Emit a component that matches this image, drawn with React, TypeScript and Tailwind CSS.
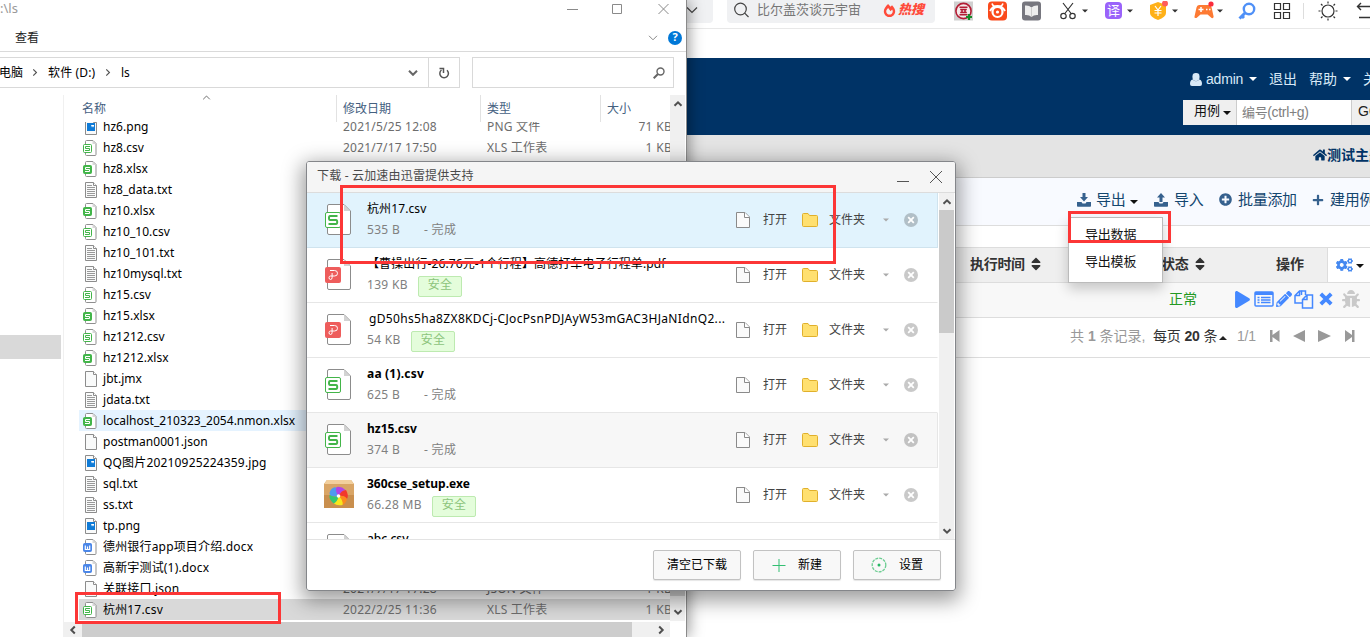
import {
  FaBug,
  FaCogs,
  FaFireAlt,
  FaHome,
  FaPencilAlt,
  FaPlay,
  FaPlus,
  FaPlusCircle,
  FaSort,
} from "react-icons/fa";

type FileKind = "img" | "csv" | "xlsx" | "txt" | "blank" | "docx";

interface FileItem {
  name: string;
  kind: FileKind;
  date?: string;
  type?: string;
  size?: string;
}

interface DownloadItem {
  name: string;
  icon: "sheet" | "pdf" | "box";
  size: string;
  sizeWidth: string;
  safe?: boolean;
  weight?: string;
  bg?: string;
}

const files: FileItem[] = [
  { name: "hz6.png", kind: "img", date: "2021/5/25 12:08", type: "PNG 文件", size: "71 KB" },
  { name: "hz8.csv", kind: "csv", date: "2021/7/17 17:50", type: "XLS 工作表", size: "1 KB" },
  { name: "hz8.xlsx", kind: "xlsx" },
  { name: "hz8_data.txt", kind: "txt" },
  { name: "hz10.xlsx", kind: "xlsx" },
  { name: "hz10_10.csv", kind: "csv" },
  { name: "hz10_101.txt", kind: "txt" },
  { name: "hz10mysql.txt", kind: "txt" },
  { name: "hz15.csv", kind: "csv" },
  { name: "hz15.xlsx", kind: "xlsx" },
  { name: "hz1212.csv", kind: "csv" },
  { name: "hz1212.xlsx", kind: "xlsx" },
  { name: "jbt.jmx", kind: "blank" },
  { name: "jdata.txt", kind: "txt" },
  { name: "localhost_210323_2054.nmon.xlsx", kind: "xlsx" },
  { name: "postman0001.json", kind: "blank" },
  { name: "QQ图片20210925224359.jpg", kind: "img" },
  { name: "sql.txt", kind: "txt" },
  { name: "ss.txt", kind: "txt" },
  { name: "tp.png", kind: "img" },
  { name: "德州银行app项目介绍.docx", kind: "docx" },
  { name: "高新宇测试(1).docx", kind: "docx" },
  { name: "关联接口.json", kind: "blank", date: "2021/7/17 17:28", type: "JSON 文件", size: "1 KB" },
  { name: "杭州17.csv", kind: "csv", date: "2022/2/25 11:36", type: "XLS 工作表", size: "1 KB" },
];

const downloads: DownloadItem[] = [
  { name: "杭州17.csv", icon: "sheet", size: "535 B", sizeWidth: "w-[57px]", bg: "bg-[#e1f3fd] border-[#cfe3ee]" },
  { name: "【曹操出行-26.76元-1个行程】高德打车电子行程单.pdf", icon: "pdf", size: "139 KB", sizeWidth: "w-[51px]", safe: true, weight: "tracking-[0.1px]" },
  { name: "gD50hs5ha8ZX8KDCj-CJocPsnPDJAyW53mGAC3HJaNIdnQ2...", icon: "pdf", size: "54 KB", sizeWidth: "w-[44px]", safe: true, weight: "pl-0.5 tracking-[0.34px]" },
  { name: "aa (1).csv", icon: "sheet", size: "625 B", sizeWidth: "w-[57px]", weight: "font-bold tracking-[0.2px]" },
  { name: "hz15.csv", icon: "sheet", size: "374 B", sizeWidth: "w-[57px]", weight: "font-bold" },
  { name: "360cse_setup.exe", icon: "box", size: "66.28 MB", sizeWidth: "w-[65px]", safe: true, weight: "font-bold" },
  { name: "abc.csv", icon: "sheet", size: "512 B", sizeWidth: "w-[57px]", weight: "font-medium" },
];
downloads[4].bg = "bg-[#f7f7f7] border-[#e6e6e6]";

const Caret = ({ className = "w-2", up = false }: { className?: string; up?: boolean }) => (
  <svg viewBox="0 0 8 4" className={`h-1 shrink-0 ${className}`} fill="currentColor">
    <path d={up ? "M0 4h8L4 0z" : "M0 0h8L4 4z"} />
  </svg>
);

const Chevron = ({ className = "" }: { className?: string }) => (
  <svg viewBox="0 0 10 6" className={`shrink-0 ${className}`} fill="none" stroke="currentColor">
    <path d="M1 .8 5 4.8 9 .8" />
  </svg>
);

const FileIcon = ({ kind }: { kind: FileKind }) => {
  if (kind === "csv" || kind === "xlsx" || kind === "docx") {
    const color = kind === "docx" ? "#4a86e8" : "#42b549";
    const solid = kind !== "csv";
    return (
      <svg viewBox="0 0 16 16" className="size-4 shrink-0">
        <path d="M3.500 4V1.500q0-1 1-1h6.500l3 3v11q0 1-1 1h-8.500q-1 0-1-1V12" fill="#fff" stroke="#8f8f8f" />
        <path d="M10.500.5v3.500h3.500z" fill="#d8d8d8" />
        <rect x="1.500" y="4.500" width="8" height="8" rx="1" fill={solid ? color : "#fff"} stroke={color} />
        {kind === "docx" ? (
          <path d="M3.300 6.500v4h2.200v-3v3h2.200v-4" fill="none" stroke="#fff" strokeWidth="1.200" />
        ) : (
          <path d="M8 6.500H3.500v2h4v2h-4.500" fill="none" stroke={solid ? "#fff" : color} strokeWidth="1" />
        )}
      </svg>
    );
  }
  return (
    <svg viewBox="0 0 16 16" className="size-4 shrink-0">
      <path d="M3.500.5h8l3 3v12h-11z" fill="#f9fafa" stroke="#8c8c8c" />
      <path d="M11.500.5v3h3" fill="#fff" stroke="#8c8c8c" />
      {kind === "txt" && <path d="M5 3.500h5M5 5.500h8M5 7.500h8M5 9.500h8M5 11.500h8M5 13.500h8" stroke="#999" />}
      {kind === "img" && (
        <>
          <rect x="5" y="4" width="8" height="8" fill="#0f7bd7" />
          <path d="M6 6h3l1 2.500L11 7l1 1.500V6z" fill="#fff" />
        </>
      )}
    </svg>
  );
};

const BigIcon = ({ icon }: { icon: DownloadItem["icon"] }) => {
  if (icon === "box") {
    return (
      <svg viewBox="0 0 30 32" className="h-8 w-[30px] shrink-0">
        <path d="M3 2h24l3 4v24H0V6z" fill="#c98f4e" />
        <path d="M3 2h24l3 4H0z" fill="#f2cf9d" />
        <path d="M0 6h30v11H0z" fill="#d9a566" />
        <g transform="translate(14.500 18)">
          <path d="M0 0Q-9 2-9-3-8-8-3-9-2-5 0 0z" fill="#4f9af0" />
          <path d="M0 0Q-4-5-2-9q5-1 9 3-4 1-7 6z" fill="#b045e8" />
          <path d="M0 0Q3-6 7.500-6q3 5 1 9Q5-1 0 0z" fill="#f2382c" />
          <path d="M0 0q6-1 8.500 3Q7 8 4 9 3 3 0 0z" fill="#fb8a1e" />
          <path d="M0 0q5 4 4 9-6 1-9-2 4-2 5-7z" fill="#f8e71c" />
          <path d="M0 0Q-1 6-5 7.500-10 3-9-1-4 2 0 0z" fill="#35c772" />
          <circle r="1.800" fill="#fff" />
        </g>
      </svg>
    );
  }
  return (
    <svg viewBox="0 0 30 32" className="h-8 w-[30px] shrink-0">
      <path d="M3.500 9V3q0-1.500 1.500-1.500h15l6.500 6.500v22q0 1.500-1.500 1.500H5q-1.500 0-1.500-1.500v-5" fill="#fff" stroke="#8c8c8c" />
      <path d="M20 2v6h6z" fill="#d3d3d3" />
      {icon === "sheet" ? (
        <>
          <rect x="1.500" y="9.500" width="15" height="15" rx="1.500" fill="#fff" stroke="#43b549" />
          <path d="M13.500 13H6q-1 0-1 2t1 2h6q1.200 0 1.200 2t-1.200 2H4.500" fill="none" stroke="#43b549" strokeWidth="2" />
        </>
      ) : (
        <>
          <rect x="1" y="9" width="16" height="16" rx="2" fill="#ee5d5c" />
          <path d="M6 12.500h4.500q3 0 3 2.800t-3 2.700H6.500Q5 18 5 19.700t1.500 1.800 1.600-1.800V15" fill="none" stroke="#fff" />
        </>
      )}
    </svg>
  );
};

const ScrollArrow = ({ dir }: { dir: string }) => (
  <svg viewBox="0 0 10 10" className={`size-2.5 shrink-0 ${dir}`} fill="none" stroke="#505050" strokeWidth="2">
    <path d="M1.500 6.800 5 3.300l3.500 3.500" />
  </svg>
);

const Tray = ({ up = false }: { up?: boolean }) => (
  <svg viewBox="0 0 14 14" className="h-3.5 w-3.5 shrink-0" fill="#36618e">
    <path d={up ? "M7 0l4 4.500H8.500V9h-3V4.500H3z" : "M5.500 0h3v4H11L7 8.500 3 4h2.500z"} />
    <path d="M0 9h4.500l1 1.500h3l1-1.500H14v4q0 .8-.8.8H.8Q0 13.800 0 13z" />
  </svg>
);

const BrowserBar = () => (
  <div className="flex h-[29px] items-start border-b border-[#e8e8e8] bg-white">
    <div className="flex h-[23px] w-[27px] shrink-0 items-center rounded-br bg-[#f0f1f3] pb-1">
      <svg viewBox="0 0 12 8" className="h-2 w-3" fill="none" stroke="#444" strokeWidth="1.200">
        <path d="m1 1.500 5 5 5-5" />
      </svg>
    </div>
    <div className="ml-3.5 flex h-[23px] w-[208px] shrink-0 items-center rounded-b bg-[#f0f1f3] pb-[3px] pl-[7px]">
      <svg viewBox="0 0 16 16" className="size-4 shrink-0" fill="none" stroke="#444" strokeWidth="1.200">
        <circle cx="6.500" cy="7" r="5.800" />
        <path d="m10.700 11.200 3.800 3.800" />
      </svg>
      <span className="ml-[7px] w-[126px] shrink-0 text-[13px] whitespace-nowrap text-[#777]">比尔盖茨谈元宇宙</span>
      <FaFireAlt className="size-[13px] shrink-0 text-[#ff4b3a]" />
      <span className="ml-[2px] text-[13px] font-black whitespace-nowrap text-[#ff4b3a] italic">热搜</span>
    </div>
    <div className="flex h-[21px] shrink-0 items-center pl-[19px]">
      <svg viewBox="0 0 20 20" className="size-5 shrink-0">
        <rect width="19" height="19" y=".5" fill="#d0d0d0" />
        <circle cx="9.500" cy="10" r="7.600" fill="#f5eaea" stroke="#b31c34" strokeWidth="1.600" />
        <path d="M5.500 6.200h8M6.200 8.500h6.600M8 8.500v3M11 8.500v3M6.200 11.500h6.600M5.500 13.800h8" fill="none" stroke="#b31c34" strokeWidth="1.600" />
        <path d="M15 13v6M12 16h6" stroke="#188b29" strokeWidth="2.200" />
      </svg>
      <svg viewBox="0 0 20 20" className="ml-3.5 size-5 shrink-0">
        <rect width="19" height="19" y=".5" rx="4" fill="#fa4a1c" />
        <path d="M4 2.500q1 3 3.500 3.500M15 2.500q-1 3-3.500 3.500" stroke="#fff" strokeWidth="1.600" fill="none" />
        <path d="M2 10q3-5 7.500-5t7.500 5" stroke="#fff" strokeWidth="2" fill="none" />
        <circle cx="9.500" cy="11" r="5" stroke="#fff" strokeWidth="2.200" fill="none" />
        <circle cx="9.500" cy="11" r="1.600" fill="#fff" />
      </svg>
      <svg viewBox="0 0 20 20" className="ml-3.5 size-5 shrink-0">
        <rect width="19" height="19" y=".5" rx="3" fill="#77777f" />
        <path d="M3 4.500q4-.5 6.500 2 2.500-2.500 6.500-2V14q-4-.5-6.500 2Q7 13.500 3 14z" fill="#eee" />
        <path d="M9.500 6.500V16" stroke="#ccc" />
      </svg>
      <svg viewBox="0 0 16 18" className="ml-[18px] h-[18px] w-4 shrink-0" fill="none" stroke="#333" strokeWidth="1.200">
        <path d="M3 1l8.500 11M13 1 4.500 12" />
        <circle cx="3.500" cy="14" r="2.700" />
        <circle cx="12.500" cy="14" r="2.700" />
      </svg>
      <Caret className="ml-[6px] w-1.5 text-[#333]" />
      <span className="ml-[17px] flex h-[17px] w-[17px] shrink-0 items-center justify-center rounded-sm bg-[#9a63fa] text-[13px] leading-none text-white">译</span>
      <Caret className="ml-[5px] w-1.5 text-[#333]" />
      <svg viewBox="0 0 19 20" className="ml-[16px] h-5 w-[19px] shrink-0">
        <path d="m9 1 8 3v8q0 4-8 7-8-3-8-7V4z" fill="#ffb118" />
        <path d="m6 5 3 4 3-4M5.500 9.500h7M5.500 12h7M9 9v6" fill="none" stroke="#fff" strokeWidth="1.200" />
        <circle cx="16" cy="2.500" r="3" fill="#ff5b5b" />
      </svg>
      <Caret className="ml-[4px] w-1.5 text-[#333]" />
      <svg viewBox="0 0 20 20" className="ml-[16px] size-5 shrink-0">
        <path d="M5 4h10q2 0 2.600 2.600l2 9q0 2-2 1.500l-4-3.600H6.500L2.500 17Q0 17.500.5 15.500l2-9Q3 4 5 4z" fill="#fd7a33" />
        <path d="M4.500 8.500h5M7 6v5M12 8.500h1.500M15 8.500h1.500" stroke="#fff" strokeWidth="1.500" />
        <circle cx="17" cy="3" r="2.600" fill="#fb2c3c" />
      </svg>
      <Caret className="ml-[3px] w-1.5 text-[#333]" />
      <svg viewBox="0 0 18 18" className="ml-[15px] size-[18px] shrink-0" fill="none" stroke="#4f90f7">
        <circle cx="11" cy="7" r="5.200" strokeWidth="2.400" />
        <path d="m7 11-5.500 5.500M3 13l3 3" strokeWidth="3" />
      </svg>
      <svg viewBox="0 0 18 18" className="ml-[17px] size-[18px] shrink-0" fill="none" stroke="#333" strokeWidth="1.200">
        <path d="M1.500 1.500h6v6h-6zM10.500 1.500h6v6h-6zM1.500 10.500h6v6h-6zM10.500 10.500h6v6h-6z" />
      </svg>
      <span className="ml-3 h-4 w-px bg-[#ddd]" />
      <svg viewBox="0 0 20 20" className="ml-3.5 size-5 shrink-0" fill="none" stroke="#333" strokeWidth="1.200">
        <circle cx="10" cy="10" r="6" />
        <path d="M10 .5v2M10 17.500v2M.5 10h2M17.500 10h2M3 3l1.500 1.500M15.500 15.500 17 17M3 17l1.500-1.500M15.500 4.500 17 3" />
      </svg>
      <svg viewBox="0 0 20 18" className="ml-[18px] h-[18px] w-5 shrink-0" fill="none" stroke="#333" strokeWidth="1.400">
        <path d="M5 1 1.500 4.500 5 8M1.500 4.500H13q5 0 5 5.500t-5 5.500H3" />
      </svg>
    </div>
  </div>
);

const Browser = () => (
  <div className="absolute top-0 left-[686px] h-[637px] w-[684px] overflow-hidden bg-white font-['Liberation_Sans','Noto_Sans_CJK_SC',sans-serif] text-[14px]">
    <BrowserBar />
    <div className="h-[29px]" />
    <div className="h-[77px] bg-[#003366] pt-[11px]">
      <div className="flex h-5 items-center pl-[504px] whitespace-nowrap text-[#d8e9f7]">
        <svg viewBox="0 0 12 13" className="h-[13px] w-3 shrink-0" fill="currentColor">
          <rect x="2.500" width="7" height="8" rx="3.300" />
          <path d="M2.500 6.500Q0 7 0 11q0 2 2 2h8q2 0 2-2 0-4-2.500-4.500Q6 10 2.500 6.500z" />
        </svg>
        <span className="ml-[4px] w-[43px] shrink-0 tracking-[-0.2px]">admin</span>
        <Caret className="w-2 text-white" />
        <span className="ml-[12px] w-10 shrink-0">退出</span>
        <span className="w-[34px] shrink-0">帮助</span>
        <Caret className="w-2 text-white" />
        <span className="ml-3">关于</span>
      </div>
      <div className="mt-[11px] ml-[497px] flex h-[25px] whitespace-nowrap">
        <div className="flex w-[54px] shrink-0 items-center border-r border-[#ccc] bg-[#efefef] pb-1 pl-[11px] text-[13px] text-[#111]">
          用例
          <Caret className="mt-1 ml-[3px] w-2" />
        </div>
        <div className="flex w-[114px] shrink-0 items-center bg-white pl-[5px] tracking-[-0.35px] text-[#808080]">
          <span className="text-[13px]">编号</span>(ctrl+g)
        </div>
        <div className="flex w-10 shrink-0 items-center border-l border-[#ccc] bg-[#efefef] pb-0.5 pl-1.5 text-[#222]">GO</div>
      </div>
    </div>
    <div className="flex h-[43px] items-center border-b border-[#ccc] bg-[#e4e4e4] pb-0.5 pl-[627px] text-[14px] font-bold whitespace-nowrap text-[#003366]">
      <FaHome className="h-3.5 w-[14px] shrink-0" />
      测试主题
    </div>
    <div className="flex h-12 items-center border-b border-[#ddd] bg-[#f8faff] pb-1 pl-[391px] text-[15px] tracking-[-0.3px] whitespace-nowrap text-[#14466f]">
      <Tray />
      <span className="mt-px ml-[5px] w-[34px] shrink-0">导出</span>
      <Caret className="mt-1 w-2 text-[#111]" />
      <span className="w-4 shrink-0" />
      <Tray up />
      <span className="mt-px ml-[6px] w-[45px] shrink-0">导入</span>
      <FaPlusCircle className="size-[13px] shrink-0 text-[#36618e]" />
      <span className="mt-px ml-1.5 w-[74px] shrink-0">批量添加</span>
      <FaPlus className="size-3 shrink-0 text-[#36618e]" />
      <span className="mt-px ml-1.5">建用例</span>
    </div>
    <div className="h-[22px] border-b border-[#ddd]" />
    <div className="flex h-[35px] items-center border-b border-[#ddd] bg-[#efefef] pl-[284px] font-bold whitespace-nowrap text-[#333]">
      <span className="w-[60px] shrink-0 pb-0.5 tracking-[-0.3px]">执行时间</span>
      <FaSort className="mb-0.5 h-4 w-3 shrink-0" />
      <span className="ml-[119px] w-[33px] shrink-0 pb-0.5 tracking-[-0.3px]">状态</span>
      <FaSort className="mb-0.5 h-4 w-3 shrink-0" />
      <span className="ml-[70px] w-[51px] shrink-0 pb-0.5">操作</span>
      <div className="flex h-[34px] w-[44px] shrink-0 items-center border-l border-[#ddd] bg-white pl-2">
        <FaCogs className="h-4 w-[17px] text-[#4488f0]" />
        <Caret className="mt-0.5 ml-[3px] w-2 text-[#111]" />
      </div>
    </div>
    <div className="flex h-[35px] items-center border-b border-[#ddd] bg-[#f8f8f8] pb-0.5 pl-[483px] text-[#4488ff]">
      <span className="w-[65px] shrink-0 text-[#229922]">正常</span>
      <FaPlay className="h-[17px] w-[17px] shrink-0" />
      <svg viewBox="0 0 20 16" className="ml-[3px] h-4 w-5 shrink-0" fill="none" stroke="currentColor">
        <rect x="1" y="1" width="18" height="14" rx="1" strokeWidth="1.500" />
        <path d="M1 2.500h18" strokeWidth="3" />
        <path d="M3.500 6.500h2M3.500 9h2M3.500 11.500h2M7 6.500h9.500M7 9h9.500M7 11.500h9.500" strokeWidth="1.300" />
      </svg>
      <FaPencilAlt className="ml-[2px] size-4 shrink-0" />
      <svg viewBox="0 0 20 19" className="ml-0.5 h-[19px] w-5 shrink-0" fill="none" stroke="currentColor" strokeWidth="1.500">
        <path d="M7.500 5V1h-2L1 5.500V13h7.500M5.500 1v4.500H1" />
        <path d="M13 5h5.500v13H8.500V9.500zM13 5v4.500H8.500M7.500 1h4v4" />
      </svg>
      <svg viewBox="0 0 14 14" className="ml-[5px] size-3.5 shrink-0" stroke="currentColor" strokeWidth="3.800">
        <path d="m1.800 1.800 10.400 10.400M12.200 1.800 1.800 12.200" />
      </svg>
      <FaBug className="ml-[9px] size-[18px] shrink-0 text-[#c9c9c9]" />
    </div>
    <div className="flex h-10 items-center border-b border-[#ddd] pb-[3px] pl-[384px] whitespace-nowrap text-[#999]">
      <span className="w-[83px] shrink-0">
        共 <b>1</b> 条记录,
      </span>
      <span className="w-[66px] shrink-0 tracking-[-0.15px] text-[#333]">
        每页 <b>20</b> 条
      </span>
      <Caret up className="mt-1 w-2 text-[#222]" />
      <span className="ml-[10px] w-[33px] shrink-0 tracking-[-0.2px]">1/1</span>
      <svg viewBox="0 0 90 12" className="h-3 w-[90px] shrink-0" fill="#999">
        <path d="M0 0h2.500v5l7-5v12l-7-5v5H0zM23 6l12-6v12zM48 0l13 6-13 6zM82 0h2.500v12H82V7l-7 5V0l7 5z" />
      </svg>
    </div>
  </div>
);

const ExportMenu = () => (
  <div className="absolute top-[217px] left-[1068px] flex h-[66px] w-[95px] flex-col border border-[#bbb] bg-white pt-[3px] pl-4 font-['Liberation_Sans','Noto_Sans_CJK_SC',sans-serif] text-[13px] tracking-[-0.2px] text-[#141414] shadow-[0_6px_12px_rgba(0,0,0,0.2)]">
    <span className="h-[27px] leading-[27px]">导出数据</span>
    <span className="h-[27px] leading-[27px]">导出模板</span>
  </div>
);

const Explorer = () => (
  <div className="absolute top-0 left-0 flex h-[637px] w-[687px] flex-col border-r border-[#8a8a8a] bg-white text-[12px] shadow-[2px_0_14px_rgba(0,0,0,0.4)]">
    <div className="flex h-[18px] shrink-0 items-center text-[#999]">
      <span className="w-[566px] shrink-0 text-[13px]">:\ls</span>
      <svg viewBox="0 0 106 12" className="h-3 w-[106px] shrink-0" fill="none" stroke="#8a8a8a">
        <path d="M1 6.500h11M46.500 1.500h9v9h-9zM92.500 1l10 10M102.500 1l-10 10" />
      </svg>
    </div>
    <div className="flex h-[34px] shrink-0 items-center border-b border-[#dadada] pt-1.5 pl-[15px] text-[#222]">
      <span className="w-[633px] shrink-0">查看</span>
      <Chevron className="h-1.5 w-2.5 text-[#888]" />
      <span className="ml-2.5 flex size-3.5 shrink-0 items-center justify-center rounded-full bg-[#0078d7] text-[11px] font-bold text-white">?</span>
    </div>
    <div className="mt-[5px] flex h-[31px] shrink-0 text-black">
      <div className="flex w-[429px] items-center border-y border-r border-[#d9d9d9] whitespace-nowrap">
        <span className="-ml-px w-[32px] shrink-0">电脑</span>
        <Chevron className="h-[5px] w-2 -rotate-90 stroke-[1.5] text-[#555]" />
        <span className="ml-[9px] w-[56px] shrink-0 tracking-[0.15px]">软件 (D:)</span>
        <Chevron className="h-[5px] w-2 -rotate-90 stroke-[1.5] text-[#555]" />
        <span className="ml-[9px] w-[287px] shrink-0">ls</span>
        <Chevron className="h-1.5 w-2.5 stroke-2 text-[#666]" />
      </div>
      <div className="flex w-[31px] items-center justify-center border-y border-r border-[#d9d9d9]">
        <svg viewBox="0 0 12 12" className="size-3" fill="none" stroke="#555" strokeWidth="1.500">
          <path d="M3.500 3a4.300 4.300 0 1 0 5.500.2M1.500 1.500h4V6" />
        </svg>
      </div>
      <div className="ml-3 flex w-[202px] items-center justify-end border border-[#d9d9d9] pr-2">
        <svg viewBox="0 0 12 12" className="size-3" fill="none" stroke="#666" strokeWidth="1.400">
          <circle cx="7.500" cy="4.500" r="3.500" />
          <path d="M5 7 .7 11.300" strokeWidth="2" />
        </svg>
      </div>
    </div>
    <div className="mt-[7px] flex h-[542px]">
      <div className="w-16 shrink-0 border-r border-[#f0f0f0] pt-[240px]">
        <div className="h-6 w-[61px] bg-[#d9d9d9]" />
      </div>
      <div className="flex w-[606px] shrink-0 flex-col">
        <div className="flex h-[27px] shrink-0 text-[#44607f]">
          <div className="relative w-[273px] shrink-0 border-r border-[#e2e2e2] pt-[5px] pl-[18px]">
            名称
            <Chevron className="absolute top-0 left-[138px] h-[5px] w-[9px] rotate-180 text-[#555]" />
          </div>
          <div className="w-36 shrink-0 border-r border-[#e2e2e2] pt-[5px] pl-1.5">修改日期</div>
          <div className="w-[120px] shrink-0 border-r border-[#e2e2e2] pt-[5px] pl-1.5">类型</div>
          <div className="pt-[5px] pl-1.5">大小</div>
        </div>
        <div className="flex h-[499px] shrink-0 flex-col justify-end overflow-hidden pb-px pl-[15px]">
          {files.map((file) => (
            <div
              key={file.name}
              className={`flex h-[21px] shrink-0 items-center whitespace-nowrap ${
                file.name.startsWith("localhost") ? "bg-[#e5f3ff]" : file.name === "杭州17.csv" ? "bg-[#d9d9d9]" : ""
              }`}
            >
              <span className="w-[3px] shrink-0" />
              <FileIcon kind={file.kind} />
              <span className={`ml-[5px] w-60 shrink-0 text-black ${/[\u4e00-\u9fa5]/.test(file.name) ? "tracking-[0.17px]" : "tracking-[0.03px]"}`}>
                {file.name}
              </span>
              <span className="w-36 shrink-0 tracking-[0.2px] text-[#6d6d6d]">{file.date}</span>
              <span className="w-[120px] shrink-0 tracking-[0.2px] text-[#6d6d6d]">{file.type}</span>
              <span className="flex w-[65px] shrink-0 justify-end text-[#6d6d6d]">
                <span className="w-0 grow text-right [direction:rtl]">
                  <bdi className="tracking-[0.3px]">{file.size}</bdi>
                </span>
              </span>
            </div>
          ))}
        </div>
        <div className="mt-px flex h-[15px] shrink-0 items-center bg-[#f0f0f0] pl-1">
          <ScrollArrow dir="-rotate-90" />
          <div className="ml-[4px] h-full w-[550px] shrink-0 bg-[#cdcdcd]" />
          <span className="w-[24px] shrink-0" />
          <ScrollArrow dir="rotate-90" />
        </div>
      </div>
      <div className="flex h-[526px] w-[15px] shrink-0 flex-col items-center bg-[#f0f0f0] pt-1">
        <ScrollArrow dir="" />
        <div className="mt-[200px] h-[287px] w-full shrink-0 bg-[#cdcdcd]" />
        <span className="h-[11px] shrink-0" />
        <ScrollArrow dir="rotate-180" />
      </div>
    </div>
  </div>
);

const DownloadRow = ({ item }: { item: DownloadItem }) => (
  <div className={`flex h-[55px] w-[631px] shrink-0 border-r border-b pl-[17px] ${item.bg || "border-[#e6e6e6] border-r-white"}`}>
    <div className="w-[43px] shrink-0 pt-[10px]">
      <BigIcon icon={item.icon} />
    </div>
    <div className="w-[369px] shrink-0 pt-[7px] whitespace-nowrap">
      <div className={`h-[18px] leading-[18px] text-black ${item.weight || "tracking-[0.1px]"}`}>{item.name}</div>
      <div className="mt-px flex h-[21px] items-center tracking-[0.3px] text-[#808080]">
        <span className={`shrink-0 ${item.sizeWidth}`}>{item.size}</span>
        {item.safe ? (
          <span className="mt-[3px] flex h-[21px] w-11 items-center justify-center rounded-xs border border-[#bdeab0] bg-[#e4fddb] pb-0.5 text-[#8cc47c]">
            安全
          </span>
        ) : (
          <span>- 完成</span>
        )}
      </div>
    </div>
    <div className="flex items-center whitespace-nowrap text-[#444]">
      <svg viewBox="0 0 14 16" className="h-4 w-3.5 shrink-0">
        <path d="M.5.5h8.500l4.500 4.500v10.500H.5z" fill="#fafafa" stroke="#8a8a8a" />
        <path d="M8.500.5V5.500h5" fill="#fff" stroke="#8a8a8a" />
      </svg>
      <span className="ml-[13px] w-[39px] shrink-0">打开</span>
      <svg viewBox="0 0 16 14" className="h-3.5 w-4 shrink-0">
        <path d="M.5 1.500q0-1 1-1h4.500l1.500 2h7q1 0 1 1v9q0 1-1 1h-13q-1 0-1-1z" fill="#ffe070" stroke="#e0b02c" />
      </svg>
      <span className="ml-[11px] w-[54px] shrink-0">文件夹</span>
      <Caret className="w-[6px] text-[#aaa]" />
      <svg viewBox="0 0 14 14" className="ml-[15px] size-3.5 shrink-0">
        <circle cx="7" cy="7" r="7" fill="#000" opacity=".21" />
        <path d="m4.200 4.200 5.600 5.600M9.800 4.200 4.200 9.800" stroke="#fff" strokeWidth="1.800" />
      </svg>
    </div>
  </div>
);

const footerButton = "flex h-[30px] w-[88px] items-center justify-center rounded-xs border border-[#c2c2c2] bg-[#f8f8f8] whitespace-nowrap shadow-[0_1px_1px_rgba(0,0,0,0.1)]";

const DownloadDialog = () => (
  <div className="absolute top-[161px] left-[306px] flex h-[430px] w-[650px] flex-col overflow-hidden rounded-[3px] border border-[#84868a] bg-white text-[12px] text-black">
    <div className="flex h-[31px] shrink-0 items-center justify-between border-b border-[#dcdcdc] bg-[#f5f5f5] pr-3 pb-0.5 pl-[10px] tracking-[0.18px] text-[#4a4a4a]">
      下载 - 云加速由迅雷提供支持
      <svg viewBox="0 0 46 14" className="mt-0.5 h-3.5 w-[46px]" fill="none" stroke="#555">
        <path d="M0 11.500h12M33 1l12 12M45 1l-12 12" />
      </svg>
    </div>
    <div className="flex h-[347px] shrink-0 overflow-hidden border-b border-[#e3e3e3]">
      <div className="flex flex-col">
        {downloads.map((item) => (
          <DownloadRow key={item.name} item={item} />
        ))}
      </div>
      <div className="ml-px flex h-[346px] w-[15px] shrink-0 flex-col items-center bg-[#f0f0f0] pt-1">
        <ScrollArrow dir="" />
        <div className="mt-[3px] h-[123px] w-full shrink-0 bg-[#cacaca]" />
        <ScrollArrow dir="mt-auto mb-[3px] rotate-180" />
      </div>
    </div>
    <div className="flex grow items-center justify-end gap-3 pr-3.5">
      <button className={footerButton}>清空已下载</button>
      <button className={footerButton}>
        <svg viewBox="0 0 14 14" className="mr-[12px] size-3.5" stroke="#33bf72">
          <path d="M.5 7.500h13M7 1v13" />
        </svg>
        新建
      </button>
      <button className={footerButton}>
        <svg viewBox="0 0 16 16" className="mr-3 size-4" fill="none" stroke="#6dcd92">
          <circle cx="8" cy="8" r="6.800" strokeWidth="1.300" strokeDasharray="3 1" />
          <circle cx="8" cy="8" r="1.500" fill="#28b865" stroke="none" />
        </svg>
        设置
      </button>
    </div>
  </div>
);

export default function App() {
  return (
    <div className="relative h-[637px] w-[1370px] overflow-hidden bg-white font-['Noto_Sans','Noto_Sans_CJK_SC',sans-serif]">
      <Browser />
      <ExportMenu />
      <Explorer />
      <div className="absolute top-[161px] left-[306px] h-[430px] w-[650px] rounded-[3px] shadow-[0_6px_20px_4px_rgba(0,0,0,0.38)]" />
      <DownloadDialog />
      {/* highlight frames */}
      <div className="absolute top-[185px] left-[340px] h-[79px] w-[496px] border-3 border-[#fc3636]" />
      <div className="absolute top-[211px] left-[1068px] h-8 w-[103px] border-3 border-[#fc3636]" />
      <div className="absolute top-[592px] left-[75px] h-8 w-[206px] border-3 border-[#fc3636]" />
    </div>
  );
}
